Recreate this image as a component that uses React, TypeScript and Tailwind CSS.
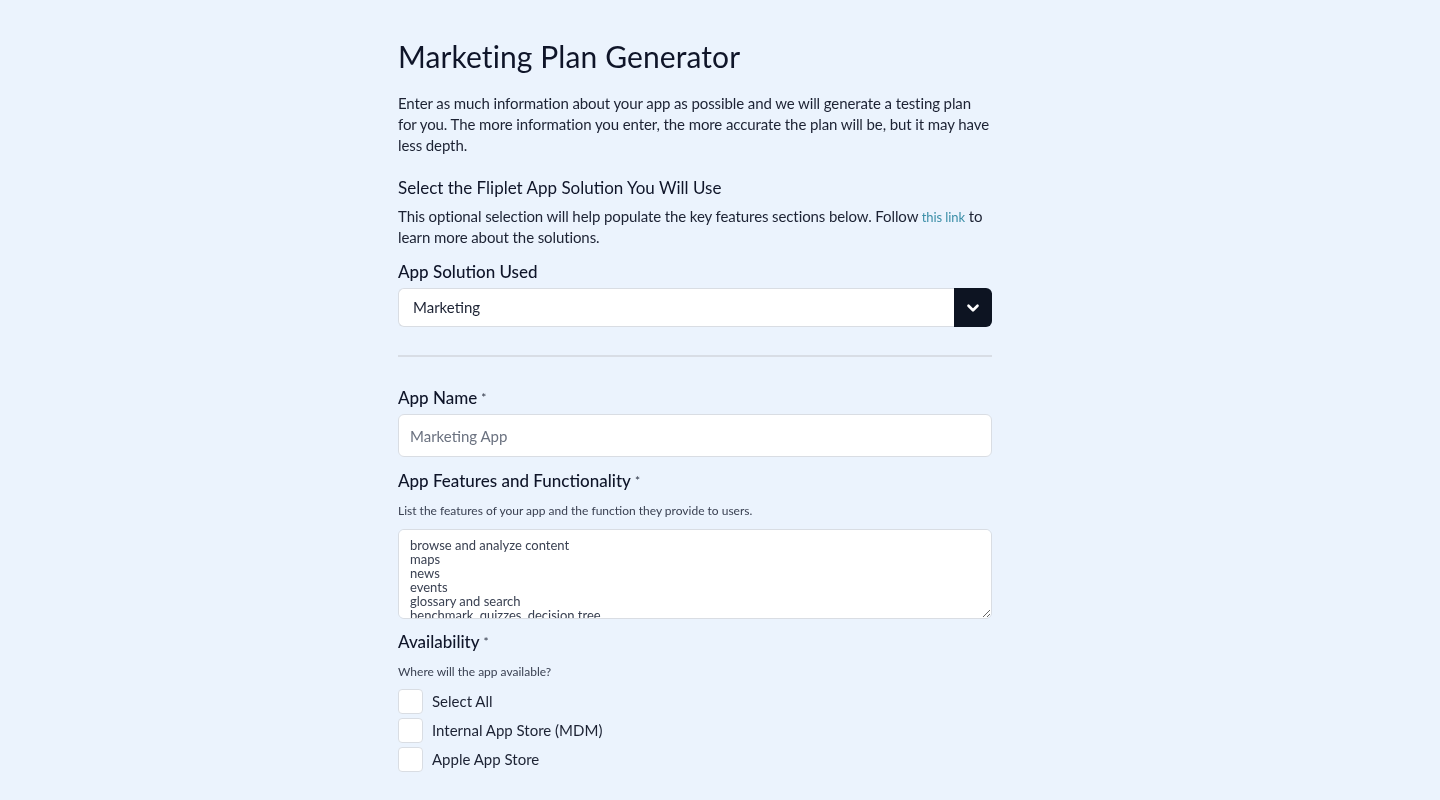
import { ChevronDown } from 'lucide-react'

// Marketing plan generator form: intro copy, solution select, then the app detail fields.

const FEATURES = [
  'browse and analyze content',
  'maps',
  'news',
  'events',
  'glossary and search',
  'benchmark, quizzes, decision tree',
  'push notifications',
].join('\n')

const STORES = ['Select All', 'Internal App Store (MDM)', 'Apple App Store']

function Label({ children, required }: { children: React.ReactNode; required?: boolean }) {
  return (
    <div className="text-[17px] leading-[22px] font-medium text-[#0f1529]">
      {children}
      {required && <span className="text-[12px] align-top ml-1 text-[#333a4a]">*</span>}
    </div>
  )
}

export default function App() {
  const box = 'w-full rounded-md border border-[#d9dde3] bg-white'

  return (
    <div className="min-h-[800px] bg-[#ebf3fd] font-['Lato',sans-serif] text-[#1c2233]">
      <div className="w-[594px] ml-[398px] pt-[37px]">
        <h1 className="text-[30px] leading-[38px] text-[#0f1529] tracking-[0.1px]">Marketing Plan Generator</h1>

        <p className="mt-[18px] text-[15px] leading-[21px] tracking-[-0.1px] text-[#1c2233]">
          Enter as much information about your app as possible and we will generate a testing plan for you. The
          more information you enter, the more accurate the plan will be, but it may have less depth.
        </p>

        <h2 className="mt-[21px] text-[17px] leading-[22px] text-[#0f1529]">Select the Fliplet App Solution You Will Use</h2>
        <p className="mt-[7px] text-[15px] leading-[21px] tracking-[-0.1px]">
          This optional selection will help populate the key features sections below. Follow{' '}
          <a href="#" className="text-[13px] leading-[15px] text-[#3c8fa8]">this link</a> to learn more about the solutions.
        </p>

        <div className="mt-[13px]">
          <Label>App Solution Used</Label>
          <div className="mt-[5px] flex h-[39px]">
            <div className="flex-1 flex items-center px-[14px] rounded-l-md border border-r-0 border-[#d9dde3] bg-white text-[15px] text-[#1c2233]">
              Marketing
            </div>
            <div className="w-[38px] flex items-center justify-center rounded-r-md bg-[#0d1422] text-white">
              <ChevronDown size={18} strokeWidth={3.5} />
            </div>
          </div>
        </div>

        <hr className="mt-[28px] border-0 h-[2px] bg-[#d8dde5]" />

        <div className="mt-[30px]">
          <Label required>App Name</Label>
          <input className={`${box} mt-[5px] h-[43px] px-[11px] text-[15px] placeholder-[#6b7280] outline-none`} placeholder="Marketing App" />
        </div>

        <div className="mt-[13px]">
          <Label required>App Features and Functionality</Label>
          <div className="mt-[11px] text-[12px] leading-[16px] text-[#3a4152]">List the features of your app and the function they provide to users.</div>
          <textarea
            className={`${box} mt-[10px] block h-[90px] px-[11px] py-[8px] text-[13px] leading-[14px] text-[#3a4152] outline-none`}
            defaultValue={FEATURES}
          />
        </div>

        <div className="mt-[12px]">
          <Label required>Availability</Label>
          <div className="mt-[11px] text-[12px] leading-[16px] text-[#3a4152]">Where will the app available?</div>
          <div className="mt-[9px] flex flex-col gap-[4px]">
            {STORES.map(s => (
              <label key={s} className="flex items-center gap-[9px] text-[15px] text-[#1c2233]">
                <span className="w-[25px] h-[25px] rounded-[4px] border border-[#d9dde3] bg-white" />
                {s}
              </label>
            ))}
          </div>
        </div>
      </div>
    </div>
  )
}
